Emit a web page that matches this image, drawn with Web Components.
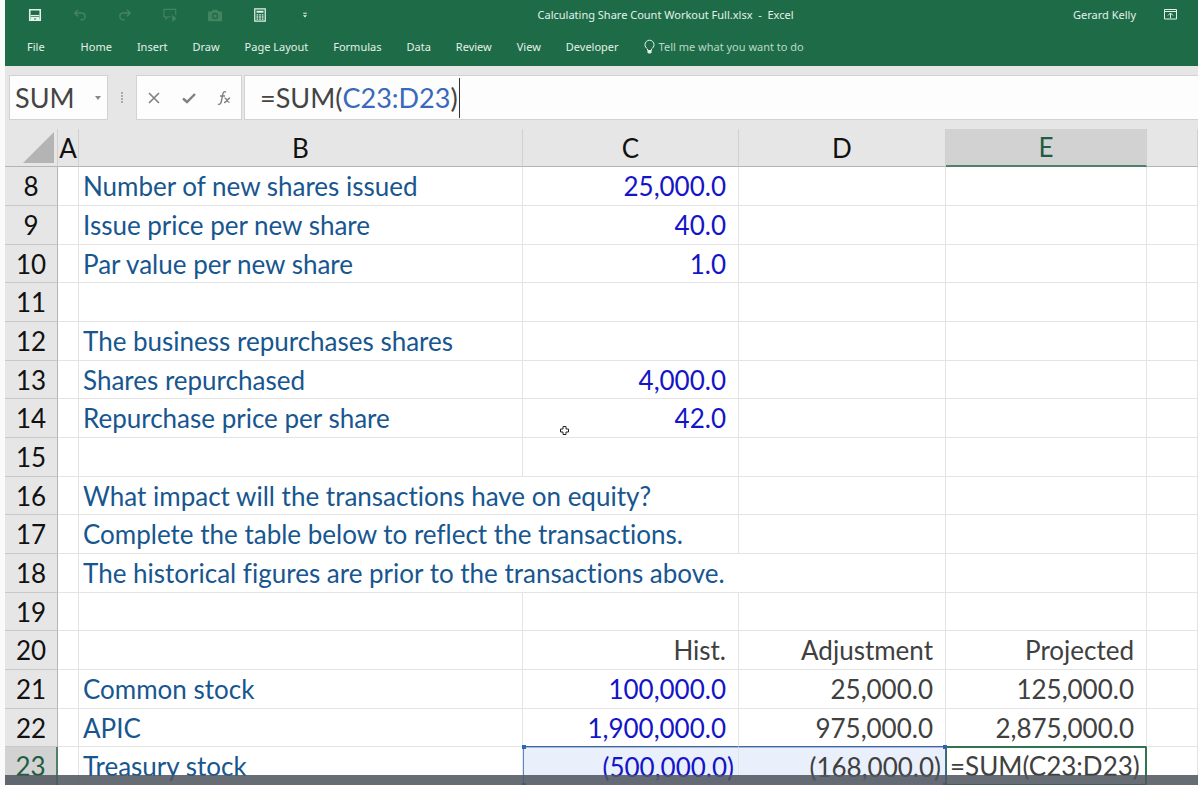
<!DOCTYPE html>
<html lang="en">
<head>
<meta charset="utf-8">
<meta name="viewport" content="width=device-width, initial-scale=1">
<title>Calculating Share Count Workout Full.xlsx - Excel</title>
<style>
  html, body { height: 100%; }
  body { margin: 0; background: #fafafa; font-family: "Noto Sans", "Open Sans", sans-serif; }
</style>
</head>
<body>
<workbook-window>
  <title-bar slot="title" user="Gerard Kelly">Calculating Share Count Workout Full.xlsx&nbsp; -&nbsp; Excel</title-bar>
  <ribbon-tabs slot="tabs" tabs="File,Home,Insert,Draw,Page Layout,Formulas,Data,Review,View,Developer">Tell me what you want to do</ribbon-tabs>
  <formula-bar slot="formula" name="SUM">=SUM(<span style="color:#3a68bb">C23:D23</span>)</formula-bar>
  <sheet-grid></sheet-grid>
</workbook-window>

<script>
class Base extends HTMLElement {
  constructor() {
    super();
    this.attachShadow({ mode: "open" });
  }
  connectedCallback() {
    this.shadowRoot.innerHTML = this.render();
  }
}

class WorkbookWindow extends Base {
  render() {
    return `<style>
      :host { display: flex; flex-direction: column; position: relative; height: 100vh; overflow: hidden; margin-left: 5px; background: #e6e6e6; }
      header { background: #1e6c47; color: #e4f1ea; padding-bottom: 5px; }
      main { flex: 1; min-height: 0; overflow: hidden; background: #fff; }
      .scrim { position: absolute; left: 0; right: 0; bottom: 0; height: 10px; background: rgba(80, 87, 97, .87); }
    </style>
    <header><slot name="title"></slot><slot name="tabs"></slot></header>
    <slot name="formula"></slot>
    <main><slot></slot></main>
    <div class="scrim"></div>`;
  }
}

const QAT = [
  ["Save", "", `<path d="M2 2h12v12H2z" fill="none" stroke="currentColor" stroke-width="1.8"/><path d="M3 8.6h10" fill="none" stroke="currentColor" stroke-width="1.3"/><path d="M3 10h10v4H9.200v-2H7v2H3z" fill="currentColor"/>`],
  ["Undo", "dim", `<path d="M5.800 2 2 5.800l3.800 3.800M2 5.800h8a3.800 3.800 0 0 1 0 7.600H8.500" fill="none" stroke="currentColor" stroke-width="1.700"/>`],
  ["Redo", "dim", `<path d="M10.200 2 14 5.800l-3.800 3.800M14 5.800H6a3.800 3.800 0 0 0 0 7.600h1.500" fill="none" stroke="currentColor" stroke-width="1.700"/>`],
  ["Touch mode", "dim", `<path d="M8.500 10H5.500L3.500 12.500V10H1V1.500h13.500V8" fill="none" stroke="currentColor" stroke-width="1.300"/><path d="M10.500 8l5 4-5 4z" fill="currentColor"/>`],
  ["Camera", "dim", `<path fill="currentColor" fill-rule="evenodd" d="M0 4h4L5.500 2h5L12 4h4v11H0zm8 1.500a3.600 3.600 0 1 0 0 7.200 3.600 3.600 0 0 0 0-7.200zm0 1.500a2.100 2.100 0 1 1 0 4.200A2.100 2.100 0 0 1 8 7z"/>`],
  ["Calculator", "", `<path d="M2 1h12v14H2z" fill="none" stroke="currentColor" stroke-width="1.400"/><path d="M4 3h8v2.500H4zM4 7h2v1.600H4zm3 0h2v1.600H7zm3 0h2v1.600h-2zM4 9.500h2v1.600H4zm3 0h2v1.600H7zm3 0h2v1.600h-2zM4 12h2v1.500H4zm3 0h2v1.500H7zm3 0h2v1.500h-2z" fill="currentColor"/>`],
  ["Customize", "", `<path d="M6 5.500h4v1.200H6zM5.700 8.200h4.600L8 10.800z" fill="currentColor"/>`]
];

class TitleBar extends Base {
  render() {
    return `<style>
      :host { display: flex; align-items: center; height: 29px; font-size: 11px; }
      .qat { display: flex; gap: 29px; padding-left: 23px; }
      button { all: unset; display: block; width: 16px; height: 16px; color: #e4f1ea; }
      .dim { color: #44835f; }
      svg { display: block; width: 14px; height: 14px; margin: 1px 0; }
      .name { flex: 1; text-align: center; }
      .user { display: flex; align-items: center; gap: 28px; padding: 0 18px 0 56px; }
    </style>
    <div class="qat">${QAT.map(([n, c, p]) => `<button class="${c}" aria-label="${n}"><svg viewBox="0 0 16 16">${p}</svg></button>`).join("")}</div>
    <div class="name"><slot></slot></div>
    <div class="user"><span>${this.getAttribute("user")}</span>
      <button aria-label="Ribbon display options"><svg viewBox="0 0 14 14"><path d="M.500 1.500h12v9.500H.500zM.500 3.500h12M6.500 10V5.500M4 7.500 6.500 5 9 7.500" fill="none" stroke="currentColor"/></svg></button></div>`;
  }
}

class RibbonTabs extends Base {
  render() {
    const tabs = this.getAttribute("tabs").split(",");
    return `<style>
      :host { display: flex; align-items: center; gap: 25px; height: 32px; padding: 3px 0 0 22px; font-size: 11px; box-sizing: border-box; }
      nav { display: flex; gap: 25px; }
      a { color: inherit; text-decoration: none; white-space: nowrap; }
      a:first-child { margin-right: 11px; }
      button { all: unset; display: flex; align-items: center; gap: 4px; color: #b9d8c8; }
      svg { width: 11px; height: 16px; color: #e4f1ea; }
    </style>
    <nav>${tabs.map(t => `<a href="#">${t}</a>`).join("")}</nav>
    <button><svg viewBox="0 0 11 16"><path d="M3.500 11.500V10C1.900 8.800 1 7.500 1 5.700a4.500 4.500 0 0 1 9 0c0 1.800-.9 3.100-2.500 4.300v1.500z" fill="none" stroke="currentColor"/><path d="M3.500 12h4v1.500l-1 1h-2l-1-1z" fill="currentColor"/></svg><slot></slot></button>`;
  }
}

class FormulaBar extends Base {
  render() {
    return `<style>
      :host { display: flex; align-items: center; height: 63px; font-family: Lato, Carlito, sans-serif; font-size: 27px; color: #444; }
      .box { display: flex; align-items: center; box-sizing: border-box; height: 45px; background: #fdfdfd; border: 1px solid #d2d2d2; }
      .name { width: 99px; margin-left: 4px; }
      .name input { width: 78px; min-width: 0; padding: 0 0 0 5px; border: 0; background: none; font: inherit; color: inherit; outline: 0; box-sizing: border-box; }
      button { all: unset; display: grid; place-items: center; }
      .name button { flex: 1; height: 100%; }
      .grip { width: 28px; display: grid; place-items: center; }
      .tools { width: 106px; justify-content: space-around; margin-right: 2px; }
      .formula { flex: 1; padding-left: 15px; border-right: 0; white-space: pre; outline: 0; }
      .caret { width: 1px; height: 40px; margin-left: 1px; background: #333; }
      svg { display: block; }
    </style>
    <div class="box name"><input aria-label="Name box" value="${this.getAttribute("name")}"><button aria-label="Open name list"><svg width="6" height="4"><path d="M0 0h6L3 4z" fill="#888"/></svg></button></div>
    <div class="grip"><svg width="2" height="12" fill="#aaa"><path d="M0 0h2v2H0zM0 3h2v2H0zM0 6h2v2H0zM0 9h2v2H0z"/></svg></div>
    <div class="box tools">
      <button aria-label="Cancel"><svg width="14" height="14" fill="none" stroke="#808080" stroke-width="1.600"><path d="M2 2l10 10M12 2 2 12"/></svg></button>
      <button aria-label="Enter"><svg width="14" height="14" fill="none" stroke="#808080" stroke-width="2.400"><path d="M1 7.500 5 11l8-8"/></svg></button>
      <button aria-label="Insert function"><svg width="14" height="16" fill="none" stroke="#808080" stroke-width="1.400"><path d="M9 2.200C7.500 1 6.300 1.800 5.900 3.800L4.300 11.500C3.800 14 2.600 15 1 14M3 6h5M7.500 8.200c2.500-.8 2 4.600 5 4.200M13 8c-2 0-3.500 4.800-6 4.500"/></svg></button>
    </div>
    <div class="box formula" contenteditable="true" role="textbox" aria-label="Formula bar" spellcheck="false"><slot></slot><i class="caret"></i></div>`;
  }
}

/* A cell is [text, class, colspan]; rows list the cells of columns A to F. */
const E = [""];
const ROWS = [
  [8, E, ["Number of new shares issued", "label"], ["25,000.0", "num in"], E, E, E],
  [9, E, ["Issue price per new share", "label"], ["40.0", "num in"], E, E, E],
  [10, E, ["Par value per new share", "label"], ["1.0", "num in"], E, E, E],
  [11, E, E, E, E, E, E],
  [12, E, ["The business repurchases shares", "label"], E, E, E, E],
  [13, E, ["Shares repurchased", "label"], ["4,000.0", "num in"], E, E, E],
  [14, E, ["Repurchase price per share", "label"], ["42.0", "num in pointer"], E, E, E],
  [15, E, E, E, E, E, E],
  [16, E, ["What impact will the transactions have on equity?", "label", 2], E, E, E],
  [17, E, ["Complete the table below to reflect the transactions.", "label", 2], E, E, E],
  [18, E, ["The historical figures are prior to the transactions above.", "label", 3], E, E],
  [19, E, E, E, E, E, E],
  [20, E, E, ["Hist.", "num"], ["Adjustment", "num"], ["Projected", "num"], E],
  [21, E, ["Common stock", "label"], ["100,000.0", "num in"], ["25,000.0", "num"], ["125,000.0", "num"], E],
  [22, E, ["APIC", "label"], ["1,900,000.0", "num in over-ref"], ["975,000.0", "num over-ref"], ["2,875,000.0", "num over-edit"], E],
  [23, E, ["Treasury stock", "label"], ["(500,000.0)", "num in neg ref first"], ["(168,000.0)", "num neg ref last"], ["=SUM(C23:D23)", "edit"], E]
];

class SheetGrid extends Base {
  render() {
    const cell = ([t, c = "", span = 1]) => {
      let body = t;
      if (c === "edit") body = `<input aria-label="Cell E23" value="${t}">`;
      if (c.includes("pointer")) body += `<svg class="cross" viewBox="0 0 9 9"><path d="M3 .5h3V3h2.500v3H6v2.500H3V6H.5V3H3z" fill="#fff" stroke="#222"/></svg>`;
      if (c.includes("first")) body += `<b class="h tl"></b><b class="h bl"></b>`;
      if (c.includes("last")) body += `<b class="h tr"></b><b class="h br"></b>`;
      return `<td class="${c}" colspan="${span}">${body}</td>`;
    };
    return `<style>
      :host { display: block; color: #404040; font-family: Lato, Carlito, sans-serif; font-size: 26px; line-height: 34px; font-variant-ligatures: none; }
      table { width: 100%; table-layout: fixed; border-spacing: 0; }
      .rh { width: 53px; } .a { width: 21px; } .b { width: 444px; } .c { width: 216px; } .d { width: 207px; } .e { width: 201px; }
      th, td { box-sizing: border-box; padding: 0; font-weight: 400; white-space: nowrap; border-right: 1px solid #e4e4e4; border-bottom: 1px solid #e4e4e4; position: relative; }
      th { background: #e6e6e6; color: #111; border-color: #c8c8c8; }
      thead th { height: 38px; border-bottom-color: #b4b4b4; border-right-color: #d0d0d0; }
      tbody tr { height: 39px; }
      tbody tr:nth-child(3n) { height: 38px; }
      tbody th { border-right-color: #b4b4b4; }
      thead .on { background: #d2d2d2; color: #215c43; border-bottom: 2px solid #4f8068; }
      tbody .on { background: #d2d2d2; color: #215c43; border-right: 2px solid #4f8068; }
      .corner svg { display: block; margin: 0 2px 0 auto; }
      .label { padding-left: 4px; color: #17568f; }
      .num { text-align: right; padding-right: 12px; }
      .neg { padding-right: 4px; }
      .in { color: #1414c8; }
      .over-ref { border-bottom-color: #41699f; }
      .over-edit { border-bottom-color: #2f7350; }
      .ref { background: #e9effb; border-top: 1px solid #a5bad9; border-bottom-color: #41699f; }
      .first { border-left: 1px solid #5a8ac6; }
      .last { border-right-color: #41699f; }
      .edit { border: 2px solid #2f7350; border-width: 1px 2px 2px 1px; }
      .edit input { display: block; width: 100%; box-sizing: border-box; height: 34px; padding: 0 0 0 3px; border: 0; outline: 0; background: none; font: inherit; color: inherit; }
      .cross { position: absolute; left: 37px; top: 27px; width: 9px; height: 9px; }
      .h { position: absolute; width: 4px; height: 4px; background: #2f66b5; }
      .tl, .tr { top: -3px; } .bl, .br { bottom: -2px; }
      .tl, .bl { left: -2px; } .tr, .br { right: -2px; }
    </style>
    <table>
      <colgroup><col class="rh"><col class="a"><col class="b"><col class="c"><col class="d"><col class="e"><col></colgroup>
      <thead><tr><th class="corner" aria-label="Select all"><svg width="32" height="31"><path d="M31 0v31H0z" fill="#b4b4b4"/></svg></th>
        ${["A", "B", "C", "D", "E", ""].map(c => `<th scope="col" class="${c === "E" ? "on" : ""}">${c}</th>`).join("")}</tr></thead>
      <tbody>${ROWS.map(([n, ...cells]) => `<tr><th scope="row" class="${n === 23 ? "on" : ""}">${n}</th>${cells.map(cell).join("")}</tr>`).join("")}</tbody>
    </table>`;
  }
}

customElements.define("workbook-window", WorkbookWindow);
customElements.define("title-bar", TitleBar);
customElements.define("ribbon-tabs", RibbonTabs);
customElements.define("formula-bar", FormulaBar);
customElements.define("sheet-grid", SheetGrid);
</script>
</body>
</html>
